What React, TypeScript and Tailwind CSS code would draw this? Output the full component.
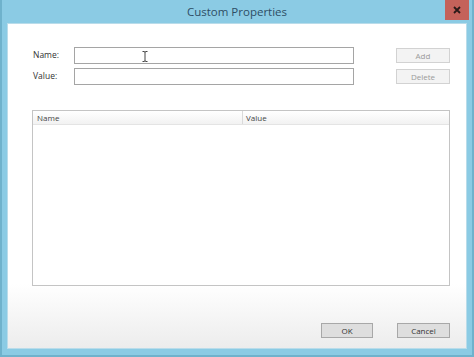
import React from 'react';

const font = { fontFamily: '"Open Sans", "Noto Sans", Arial, sans-serif' };

const SmallButton: React.FC<{ label: string; disabled?: boolean; width: string }> = ({ label, disabled, width }) => (
    <button
        className={`${width} h-[15px] flex items-center justify-center text-[8px] leading-none border ${
            disabled
                ? 'bg-[#f3f3f3] border-[#d2d2d2] text-[#9a9a9a]'
                : 'bg-[#dedede] border-[#a8a8a8] text-[#333]'
        }`}
    >
        {label}
    </button>
);

export default function App() {
    return (
        <div className="w-[474px] h-[357px] bg-[#8bcbe4] flex flex-col border-l-2 border-r-2 border-[#6fb2cc]" style={font}>
            {/* title bar */}
            <div className="relative h-[23px] flex items-center justify-center shrink-0">
                <span className="text-[11.5px] text-[#2e4e64]">Custom Properties</span>
                <div className="absolute right-[3px] top-0 w-[24px] h-[20px] bg-[#c4625a] flex items-center justify-center">
                    <svg width="8" height="8" viewBox="0 0 8 8">
                        <path d="M1 1 L7 7 M7 1 L1 7" stroke="#2a1a18" strokeWidth="1.8" />
                    </svg>
                </div>
            </div>

            {/* client area */}
            <div className="mx-[5px] h-[326px] flex flex-col bg-gradient-to-b from-white from-[80%] to-[#ececec] shadow-[inset_0_0_0_1px_#b9dcea]">
                <div className="flex items-center mt-[24px] pl-[26px]">
                    <span className="w-[41px] text-[8.5px] text-[#333]">Name:</span>
                    <div className="relative w-[280px] h-[17px] border border-[#a5a5a5] bg-white">
                        <svg className="absolute left-[67px] top-[3px]" width="6" height="11" viewBox="0 0 6 11">
                            <path d="M0.5 0.5 H2 Q3 0.5 3 1.5 V9.5 Q3 10.5 2 10.5 H0.5 M5.5 0.5 H4 Q3 0.5 3 1.5 M3 9.5 Q3 10.5 4 10.5 H5.5" stroke="#444" fill="none" strokeWidth="1" />
                        </svg>
                    </div>
                    <div className="ml-[42px]">
                        <SmallButton label="Add" disabled width="w-[54px]" />
                    </div>
                </div>
                <div className="flex items-center mt-[4px] pl-[26px]">
                    <span className="w-[41px] text-[8.5px] text-[#333]">Value:</span>
                    <div className="w-[280px] h-[17px] border border-[#a5a5a5] bg-white" />
                    <div className="ml-[42px]">
                        <SmallButton label="Delete" disabled width="w-[54px]" />
                    </div>
                </div>

                {/* list view */}
                <div className="mt-[25px] ml-[25px] w-[418px] h-[176px] border border-[#c4c4c4] bg-white flex flex-col">
                    <div className="h-[14px] flex bg-gradient-to-b from-white to-[#f2f2f2] border-b border-[#e4e4e4]">
                        <div className="w-[210px] pl-[4px] border-r border-[#dadada] text-[8px] leading-[14px] text-[#444]">Name</div>
                        <div className="flex-1 pl-[3px] text-[8px] leading-[14px] text-[#444]">Value</div>
                    </div>
                </div>

                {/* footer */}
                <div className="flex mt-[37px] ml-[314px] gap-[24px]">
                    <SmallButton label="OK" width="w-[52px]" />
                    <SmallButton label="Cancel" width="w-[53px]" />
                </div>
            </div>
            <div className="flex-1 border-b-2 border-[#6fb2cc]" />
        </div>
    );
}
